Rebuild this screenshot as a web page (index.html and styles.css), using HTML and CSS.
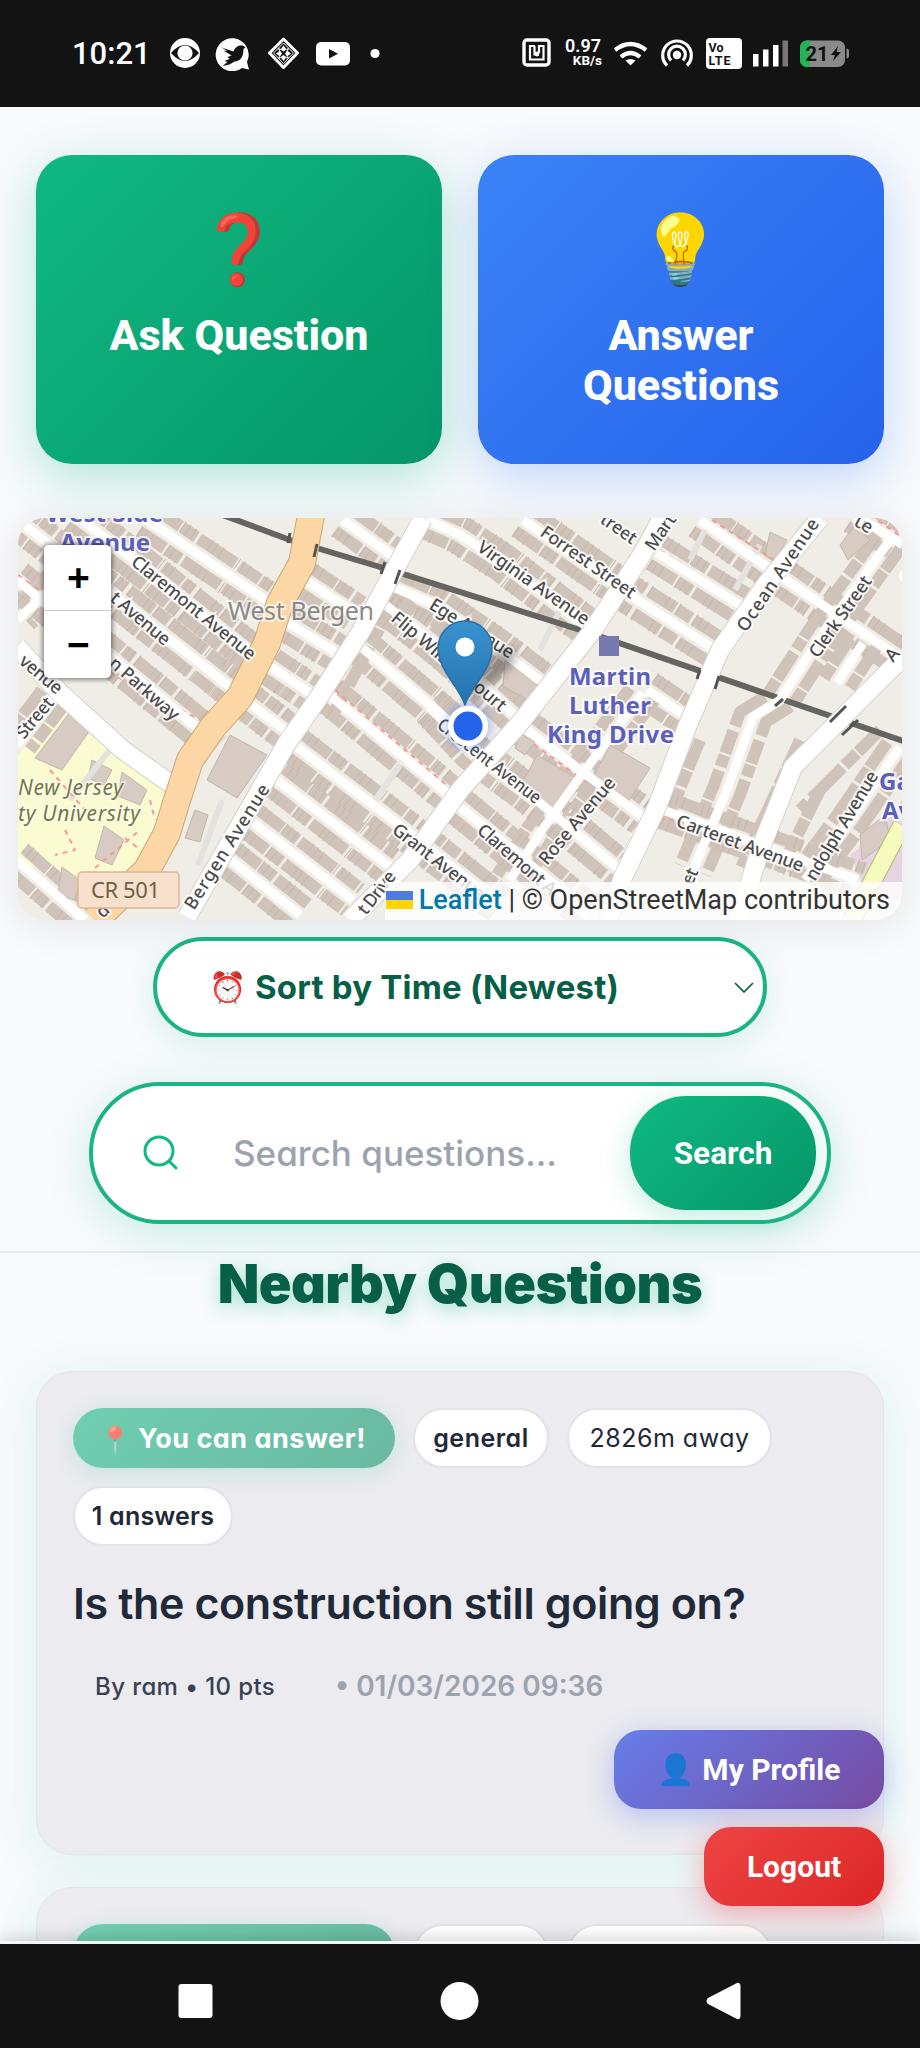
FILE: index.html
```html
<!DOCTYPE html>
<html lang="en">
<head>
    <meta charset="UTF-8">
    <meta name="viewport" content="width=device-width, initial-scale=1.0">
    <title>Nearby Questions</title>
    <link rel="stylesheet" href="styles.css">
</head>
<body>
    <header class="status-bar">
        <span class="clock">10:21</span>
        <svg class="status-left" width="214" height="36" viewBox="168 35 214 36">
            <circle cx="185" cy="53" r="15" fill="#fff"/>
            <path d="M171 53Q185 37 199 53Q185 69 171 53Z" fill="#131313"/>
            <circle cx="185" cy="53" r="7.6" fill="#fff"/>
            <path d="M249 69.500l-7-1.500a16.500 16.500 0 1 1 5-6z" fill="#fff"/>
            <path d="M221.500 47.500l12 4c2-5 5-6.500 9-6l3 1.500-2 2c0 8-3 12-9 12.500l-5 3-7 1.500 5-4-3-1 5-2-2-2 4-1.500-8-5 4 .5z" fill="#131313"/>
            <g fill="none" stroke="#fff">
                <path d="M283.500 39l14 14-14 14.500-14-14.500z" stroke-width="3" stroke-linejoin="round"/>
                <path d="M283.500 43l10 10-10 10.500-10-10.500z" stroke-width="1"/>
            </g>
            <path d="M283.500 45.500l3 4-3 2-3-2zM283.500 61l3-4-3-2-3 2zM276 53.500l4-3 2 3-2 3zM291 53.500l-4-3-2 3 2 3zM278 48l3 1-2 2zM289 48l-3 1 2 2zM278 59l3-1-2-2zM289 59l-3-1 2-2z" fill="#fff"/>
            <rect x="316" y="42" width="34" height="23.500" rx="5" fill="#fff"/>
            <path d="M329 49l9 4.700-9 4.700z" fill="#131313"/>
            <circle cx="375" cy="53.500" r="4.600" fill="#fff"/>
        </svg>
        <svg class="nfc" width="30" height="30" viewBox="0 0 30 30" fill="none" stroke="#fff">
            <rect x="2" y="2" width="25" height="25" rx="3" stroke-width="3.400"/>
            <path d="M13 8H8v13.500h13.500V8H17v7" stroke-width="2.200"/>
            <path d="M12.500 8v8.500h4" stroke-width="2.200"/>
            <circle cx="15" cy="16" r="2.400" fill="#fff" stroke="none"/>
        </svg>
        <span class="speed"><b>0.97</b><small>KB/s</small></span>
        <svg class="radios" width="286" height="36" viewBox="613 35 286 36">
            <g fill="none" stroke="#fff" stroke-width="4.200">
                <path d="M615 50Q630.500 38 646 50"/>
                <path d="M621 57Q630.500 49 640 57"/>
                <path d="M667 65.500a14.300 14.300 0 1 1 20 0" stroke-width="3.200"/>
                <path d="M671 60.500a8.400 8.400 0 1 1 12 0" stroke-width="3.200"/>
            </g>
            <path d="M625.500 60.500Q630.500 57.500 635.500 60.500L630.500 65.500Z" fill="#fff"/>
            <circle cx="677" cy="55" r="4.200" fill="#fff"/>
            <rect x="706" y="38" width="36" height="31" rx="4" fill="#fff"/>
            <text x="708.500" y="51.500" class="volte" textLength="15">Vo</text>
            <text x="708.500" y="65" class="volte" textLength="22">LTE</text>
            <path d="M753 54h5.500v12.500H753zM763 49.500h5.500v17H763zM773 45h5.500v21.500H773z" fill="#fff"/>
            <path d="M782.500 40.500h5.500v26h-5.500z" fill="#777"/>
            <rect x="800" y="40.500" width="45" height="26.500" rx="7" fill="#8a8a8a"/>
            <path d="M810 40.500h-3a7 7 0 0 0-7 7v12.500a7 7 0 0 0 7 7h3z" fill="#22b455"/>
            <path d="M846.500 48.500q2.500 0 2.500 3v4q0 3-2.500 3z" fill="#8a8a8a"/>
            <text x="805.500" y="61" class="battery" textLength="23">21</text>
            <path d="M838 46l-7 9h4l-2 6 8-9h-4.500z" fill="#111"/>
        </svg>
    </header>

    <main class="content">
        <div class="actions">
            <button class="action ask"><span class="emoji">❓</span><span>Ask Question</span></button>
            <button class="action answer"><span class="emoji">💡</span><span>Answer<br>Questions</span></button>
        </div>

        <div class="map">
            <svg class="tiles" width="884" height="402" viewBox="18 518 884 402">
                <defs>
                    <path id="cross" d="M10 510L27 527 230 687 245 700 287 732M17 580L200 730M75 515L130 557 253 655 313 695M327 693L447 793M147 520L273 605M283 620L340 655M353 640L450 722M302 578L355 613M343 520L395 558M427 520L460 535 503 563 587 627M297 747L393 820 500 905M277 780L390 867M250 820L353 900M227 857L300 915M17 860L85 920M430 707L470 750 540 803 620 870M460 807L555 885 590 915M523 727L643 817M663 810L760 845 857 880M523 520L633 597 720 653M657 553L743 607M700 520L767 567 903 660M855 515L903 545M647 690L687 717M393 587L435 605 500 650 543 683M383 603L443 650 517 717"/>
                    <path id="side" d="M890 540L823 633 780 700 753 717 727 790 693 870M643 693L583 773 540 833 510 880M900 747L850 820 805 880M863 643L837 683M60 580L17 620M55 695L17 745"/>
                    <path id="main" d="M423 518L360 633 317 700 287 743 187 917M662 518L643 553 593 630 520 723 460 790 410 860 350 920M820 518L767 583 720 650 687 727 657 807 623 877 608 920M903 657L843 717 793 767 780 800 760 850 738 920M17 647L60 693 123 750 175 787"/>
                    <path id="bus" d="M312 510L302 563 280 603 267 643 250 677 240 697 213 727 190 760 177 800 167 833 147 870 95 920"/>
                </defs>
                <rect x="18" y="518" width="884" height="402" fill="#f0ede6"/>
                <path d="M18 755L65 705 170 790 150 870 80 885 18 860z" fill="#fafbd0"/>
                <path d="M850 855L880 830 902 800V900H870z" fill="#e8d3e3"/>
                <g class="houses">
                    <use href="#cross" transform="translate(8 -11)"/>
                    <use href="#cross" transform="translate(-8 11)"/>
                    <use href="#side" transform="translate(13 5)"/>
                    <use href="#side" transform="translate(-13 -5)"/>
                    <path d="M700 740L665 825M800 740L740 870M820 790L785 860M880 730L800 810M395 600L330 720"/>
                </g>
                <g class="walls">
                    <use href="#cross" transform="translate(8 -12)"/>
                    <use href="#cross" transform="translate(-8 12)"/>
                </g>
                <g class="blocks">
                    <path d="M230 735L267 755 237 798 207 780zM70 712L90 730 62 770 35 758zM92 760L112 770 104 785 88 778zM122 772L147 790 140 805 118 796zM104 826L124 840 112 865 95 858zM62 867L80 880 75 900 58 896zM195 810L208 815 200 842 185 838z"/>
                    <path d="M537 755L583 782 558 815 520 787zM505 660L540 680 528 700 503 686zM610 745L650 768 628 802 590 782zM770 532L787 540 775 560 765 555zM855 525L870 540 848 560 840 545zM860 835L885 815 890 840 862 860zM520 733L535 742 525 755 515 748z"/>
                    <path class="lot" d="M185 775L225 735M198 865L222 800M400 765L375 800M560 610L540 650M690 560L705 530M735 590L760 545M110 750L70 800"/>
                </g>
                <path class="footway" d="M18 575L42 592M110 673L200 720M335 690L450 788M360 645L445 715M300 750L400 825M50 770L85 810M65 830L75 850 55 855M95 868L140 830M125 838L138 848M660 550L745 606M712 520L790 570M870 515L903 538M550 730L535 745 590 785M640 815L700 825M150 800L155 820"/>
                <path class="rail" d="M212 511L290 540 400 573 593 634 903 741"/>
                <g class="street">
                    <use href="#cross"/>
                    <use href="#side"/>
                </g>
                <use href="#main" class="avenue-edge"/>
                <use href="#main" class="avenue"/>
                <use href="#bus" class="county-edge"/>
                <use href="#bus" class="county"/>
                <path d="M902 825L852 920" class="yellow-edge"/>
                <path d="M902 825L852 920" class="yellow"/>
                <path class="bridge" d="M290 533l-2 10M317 544l-3 13M385 562l-4 12M400 570l-5 14M700 670l-3 9M719 676l-4 13M830 722l16-16M842 735l16-15M775 706l8-7"/>
                <circle cx="907" cy="576" r="8" fill="#fff"/>

                <g class="road-names">
                    <text transform="translate(130 564) rotate(39)" textLength="154">Claremont Avenue</text>
                    <text transform="translate(109 600) rotate(40)" textLength="72">t Avenue</text>
                    <text transform="translate(108 665) rotate(41)" textLength="86">n Parkway</text>
                    <text transform="translate(18 663) rotate(40)" textLength="50">venue</text>
                    <text transform="translate(24 740) rotate(-50)" textLength="48">Street</text>
                    <text transform="translate(194 911) rotate(-58)" textLength="144">Bergen Avenue</text>
                    <text transform="translate(366 916) rotate(-52)" textLength="50">t Drive</text>
                    <text transform="translate(391 832) rotate(38)" textLength="112">Grant Avenue</text>
                    <text transform="translate(428 608) rotate(32)" textLength="96">Ege Avenue</text>
                    <text transform="translate(390 620) rotate(40)" textLength="144">Flip Wilson Court</text>
                    <text transform="translate(476 550) rotate(35)" textLength="132">Virginia Avenue</text>
                    <text transform="translate(539 535) rotate(35)" textLength="112">Forrest Street</text>
                    <text transform="translate(599 522) rotate(35)" textLength="40">treet</text>
                    <text transform="translate(654 552) rotate(-55)" textLength="40">Mart</text>
                    <text transform="translate(746 633) rotate(-56)" textLength="132">Ocean Avenue</text>
                    <text transform="translate(818 659) rotate(-55)" textLength="95">Clerk Street</text>
                    <text transform="translate(853 525) rotate(30)" textLength="18">ue</text>
                    <text transform="translate(893 663) rotate(-50)">A</text>
                    <text transform="translate(436 727) rotate(38)" textLength="126" lengthAdjust="spacingAndGlyphs">Crescent Avenue</text>
                    <text transform="translate(476 832) rotate(41)" textLength="98">Claremont A</text>
                    <text transform="translate(547 866) rotate(-50)" textLength="108">Rose Avenue</text>
                    <text transform="translate(675 826) rotate(20)" textLength="134">Carteret Avenue</text>
                    <text transform="translate(815 882) rotate(-59)" textLength="124">ndolph Avenue</text>
                    <text transform="translate(692 886) rotate(-65)" textLength="16">et</text>
                    <text transform="translate(103 919) rotate(-45)">d</text>
                </g>
                <g class="stations">
                    <text x="46" y="522" textLength="117">West Side</text>
                    <text x="60" y="551" textLength="90">Avenue</text>
                    <text x="569" y="685" textLength="82">Martin</text>
                    <text x="569" y="714" textLength="82">Luther</text>
                    <text x="547" y="743" textLength="127">King Drive</text>
                    <text x="879" y="790">Ga</text>
                    <text x="882" y="819">Av</text>
                </g>
                <rect x="599" y="636" width="20" height="20" fill="#7679b0"/>
                <text x="228" y="620" class="suburb" textLength="146">West Bergen</text>
                <g class="campus">
                    <text x="18" y="795" textLength="105">New Jersey</text>
                    <text x="18" y="821" textLength="122">ty University</text>
                </g>
                <rect x="78" y="872" width="101" height="36" rx="4" fill="#f7e1cc" stroke="#dcb895" stroke-width="1.500"/>
                <text x="91" y="898" class="shield" textLength="69">CR 501</text>

                <path d="M466 705L510 668Q525 650 505 648Q480 655 466 705Z" fill="#000" opacity=".3" class="pin-shadow"/>
                <circle cx="468" cy="726" r="23" fill="#2563eb" opacity=".3" class="pin-shadow"/>
                <path d="M465 705C460 688 438 670 438 648a27 27 0 0 1 54 0c0 22-22 40-27 57z" fill="url(#pin)" stroke="#2a6fa5" stroke-width="1.500"/>
                <circle cx="465" cy="647" r="9.500" fill="#fff"/>
                <circle cx="468" cy="726" r="17.300" fill="#2563eb" stroke="#fff" stroke-width="5.500"/>
                <linearGradient id="pin" x2="0" y2="1">
                    <stop stop-color="#3a93cf"/>
                    <stop offset="1" stop-color="#2372ad"/>
                </linearGradient>
            </svg>
            <div class="zoom">
                <button>+</button>
                <button>−</button>
            </div>
            <div class="attribution">
                <svg width="27" height="18"><path d="M0 0h27v9H0z" fill="#4c7be1"/><path d="M0 9h27v9H0z" fill="#ffd500"/></svg>
                <b>Leaflet</b> | © OpenStreetMap contributors
            </div>
        </div>

        <div class="sort">
            <span class="emoji">⏰</span>
            <span class="sort-label">Sort by Time (Newest)</span>
            <svg width="20" height="11" viewBox="0 0 20 11" fill="none" stroke="#065f46" stroke-width="1.700"><path d="M1 1l9 9 9-9"/></svg>
        </div>

        <div class="search">
            <svg width="36" height="36" viewBox="0 0 36 36" fill="none" stroke="#10b981" stroke-width="3" stroke-linecap="round"><circle cx="16" cy="16" r="14"/><path d="M27 27l6 6"/></svg>
            <span class="placeholder">Search questions...</span>
            <button>Search</button>
        </div>
    </main>

    <section class="questions">
        <h1>Nearby Questions</h1>
        <article class="card">
            <div class="badges">
                <span class="badge can"><span class="emoji">📍</span> <span>You can answer!</span></span>
                <span class="badge category">general</span>
                <span class="badge distance">2826m away</span>
                <span class="badge count">1 answers</span>
            </div>
            <h2>Is the construction still going on?</h2>
            <p class="meta"><span class="author">By ram • 10 pts</span><span class="date">• 01/03/2026 09:36</span></p>
        </article>
        <article class="card">
            <div class="badges">
                <span class="badge can"><span class="emoji">📍</span></span>
                <span class="badge category"></span>
                <span class="badge distance"></span>
            </div>
        </article>
    </section>

    <div class="floating">
        <button class="profile"><span class="emoji">👤</span> My Profile</button>
        <button class="logout">Logout</button>
    </div>

    <nav class="nav-bar">
        <svg width="920" height="104" viewBox="0 0 920 104" fill="#fff">
            <rect x="178.500" y="40" width="34" height="34" rx="3"/>
            <circle cx="459.500" cy="57" r="19"/>
            <path d="M708 54L736 39.500q4-2 4.500 2v31q-.5 4-4.500 2L708 60q-3-3 0-6z"/>
        </svg>
    </nav>
</body>
</html>
```
FILE: styles.css
```css
* {
    box-sizing: border-box;
}

body {
    margin: 0;
    height: 2048px;
    position: relative;
    overflow: hidden;
    background: #f8fafc;
    font-family: Inter, sans-serif;
    font-feature-settings: "cv11"; /* single-storey a */
    color: #1f2937;
}

button {
    border: none;
    font-family: Roboto, sans-serif;
    color: white;
}

.emoji {
    font-family: "Noto Color Emoji", sans-serif;
}

/* Status bar */
.status-bar {
    height: 107px;
    padding: 0 0 1px 72px;
    display: flex;
    align-items: center;
    background: #131313;
    color: white;
    font-family: Roboto, sans-serif;
}

.clock {
    width: 96px;
    font-size: 31px;
    font-weight: 500;
}

.nfc {
    margin-left: 140px;
}

.speed {
    width: 50px;
    display: flex;
    flex-direction: column;
    text-align: right;
    line-height: 15px;
}

.speed b {
    padding-right: 1px;
    font-size: 18px;
    font-weight: 600;
}

.speed small {
    font-size: 13.5px;
    font-weight: 700;
}

.radios {
    margin-left: 11px;
}

.volte {
    font: 700 12.500px Roboto, sans-serif;
    fill: #131313;
}

.battery {
    font: 700 20px Roboto, sans-serif;
    fill: #111;
}

/* Top buttons */
.content {
    height: 1146px;
    padding: 48px 18px 0;
    border-bottom: 2px solid #e8ebee;
}

.actions {
    display: grid;
    grid-template-columns: 1fr 1fr;
    gap: 36px;
    padding: 0 18px;
}

.action {
    height: 309px;
    padding: 49px 0 0;
    display: flex;
    flex-direction: column;
    align-items: center;
    border-radius: 36px;
    font-size: 43px;
    font-weight: 800;
    line-height: 50px;
}

.action .emoji {
    height: 82px;
    margin-bottom: 24px;
    font-size: 68px;
    line-height: 92px;
}

.ask {
    background: linear-gradient(135deg, #10b981, #059669);
    box-shadow: 0 14px 50px rgba(16, 185, 129, 0.3);
}

.answer {
    background: linear-gradient(135deg, #3b82f6, #2563eb);
    box-shadow: 0 14px 50px rgba(59, 130, 246, 0.3);
}

/* Map */
.map {
    position: relative;
    height: 402px;
    margin-top: 54px;
    border-radius: 27px;
    overflow: hidden;
    box-shadow: 0 5px 40px rgba(0, 0, 0, 0.09);
}

.tiles {
    display: block;
    font-family: "Noto Sans", sans-serif;
}

.tiles use,
.tiles path {
    stroke-linejoin: round;
}

.houses {
    fill: none;
    stroke: #d0c3b9;
    stroke-width: 12;
    stroke-dasharray: 31 2 17 3 44 5 24 2 12 4;
}

.walls {
    fill: none;
    stroke: #c6b7ac;
    stroke-width: 12;
    stroke-dasharray: 1 5 1 6 1 19;
}

.blocks {
    fill: #d8cbc4;
    stroke: #c4b5ab;
    stroke-width: 1;
}

.lot {
    fill: none;
    stroke: #e4e2e0;
    stroke-width: 6;
}

.footway {
    fill: none;
    stroke: #f69a95;
    stroke-width: 2;
    stroke-dasharray: 5 5;
}

.rail {
    fill: none;
    stroke: #666461;
    stroke-width: 6;
}

.bridge {
    stroke: #555;
    stroke-width: 3;
}

.street {
    fill: none;
    stroke: #fff;
    stroke-width: 9;
}

.avenue-edge {
    fill: none;
    stroke: #d5d2cd;
    stroke-width: 20;
}

.avenue {
    fill: none;
    stroke: #fff;
    stroke-width: 18;
}

.county-edge {
    fill: none;
    stroke: #c9a876;
    stroke-width: 28;
}

.county {
    fill: none;
    stroke: #fcd6a4;
    stroke-width: 26;
}

.yellow-edge {
    stroke: #b3bd6c;
    stroke-width: 19;
}

.yellow {
    stroke: #f6fabd;
    stroke-width: 17;
}

.road-names text {
    font-size: 18px;
    font-weight: 500;
    fill: #4b4b4b;
    stroke: rgba(255, 255, 255, 0.8);
    stroke-width: 4;
    paint-order: stroke;
}

.stations text {
    font-size: 24px;
    font-weight: 700;
    fill: #5a60bb;
    stroke: rgba(255, 255, 255, 0.75);
    stroke-width: 4;
    paint-order: stroke;
}

.suburb {
    font-size: 25px;
    fill: #8b8886;
    stroke: rgba(255, 255, 255, 0.6);
    stroke-width: 4;
    paint-order: stroke;
}

.campus text {
    font-size: 21px;
    font-style: italic;
    fill: #757747;
    stroke: rgba(255, 255, 255, 0.6);
    stroke-width: 3;
    paint-order: stroke;
}

.shield {
    font-size: 22px;
    fill: #6f6045;
}

.pin-shadow {
    filter: blur(4px);
}

.zoom {
    position: absolute;
    left: 26px;
    top: 27px;
    width: 67px;
    border-radius: 5px;
    box-shadow: 0 0 4px 2px rgba(0, 0, 0, 0.4);
}

.zoom button {
    display: block;
    width: 67px;
    height: 67px;
    padding: 0 0 0 2px;
    background: white;
    border-radius: 0 0 5px 5px;
    color: black;
    font: 700 39px "Liberation Sans", sans-serif;
    line-height: 60px;
}

.zoom button:first-child {
    height: 66px;
    border-bottom: 1px solid #ccc;
    border-radius: 5px 5px 0 0;
}

.attribution {
    position: absolute;
    right: 0;
    bottom: 0;
    height: 38px;
    width: 517px;
    padding-right: 12px;
    background: rgba(255, 255, 255, 0.8);
    color: #333;
    font: 27px/37px Roboto, sans-serif;
    text-align: right;
    white-space: nowrap;
}

.attribution b {
    color: #0078a8;
    font-weight: 500;
}

.attribution svg {
    margin-right: -1px;
}

/* Sort and search */
.sort {
    width: 614px;
    height: 100px;
    margin: 17px auto 0;
    padding: 0 9px 0 52px;
    display: flex;
    align-items: center;
    border: 4px solid #1bb583;
    border-radius: 50px;
    background: white;
    box-shadow: 0 8px 30px rgba(16, 185, 129, 0.14);
    color: #065f46;
}

.sort .emoji {
    width: 46px;
    font-size: 30px;
}

.sort-label {
    flex: 1;
    font-size: 33px;
    font-weight: 650;
    letter-spacing: 0.2px;
}

.search {
    width: 742px;
    height: 142px;
    margin: 45px auto 0;
    padding: 0 11px 0 50px;
    display: flex;
    align-items: center;
    border: 4px solid #1bb583;
    border-radius: 71px;
    background: white;
    box-shadow: 0 10px 45px rgba(16, 185, 129, 0.2);
}

.placeholder {
    flex: 1;
    margin-left: 54px;
    color: #9ca3af;
    font-size: 35px;
    font-weight: 500;
}

.search button {
    width: 186px;
    height: 114px;
    padding: 0;
    border-radius: 56px;
    background: linear-gradient(135deg, #10b981, #059669);
    box-shadow: 0 8px 30px rgba(16, 185, 129, 0.25);
    font-size: 31.5px;
    font-weight: 700;
}

/* Questions */
.questions {
    height: 690px;
    padding: 0 36px;
    overflow: hidden;
}

h1 {
    height: 118px;
    margin: 0;
    text-align: center;
    color: #065f46;
    font-size: 54px;
    font-weight: 900;
    letter-spacing: -0.5px;
    line-height: 61px;
    text-shadow: 0 5px 18px rgba(16, 185, 129, 0.35);
    white-space: nowrap;
}

.card {
    height: 484px;
    margin-bottom: 32px;
    padding: 36px 36px 0;
    border: 1.500px solid #e2e6e9;
    border-radius: 36px;
    background: #ebebf0;
    box-shadow: 0 8px 50px rgba(16, 185, 129, 0.12);
}

.badges {
    height: 140px;
    display: flex;
    flex-wrap: wrap;
    align-content: flex-start;
    gap: 18px;
}

.badge {
    height: 60px;
    display: flex;
    align-items: center;
    justify-content: center;
    border: 2px solid #dfe4ea;
    border-radius: 30px;
    background: white;
    font-size: 25px;
    font-weight: 600;
    letter-spacing: 0.5px;
    white-space: nowrap;
}

.can {
    width: 322px;
    padding-left: 26px;
    gap: 6px;
    justify-content: flex-start;
    border: none;
    background: linear-gradient(135deg, #70cfb1, #69b9a0);
    box-shadow: 0 5px 22px rgba(16, 185, 129, 0.16);
    color: white;
    font-size: 27px;
    font-weight: 700;
}

.can .emoji {
    padding-top: 4px;
    font-size: 26px;
    filter: contrast(0.6) brightness(1.35);
}

.category {
    width: 136px;
}

.distance {
    width: 205px;
    font-weight: 400;
}

.count {
    width: 160px;
    letter-spacing: 0.2px;
}

h2 {
    height: 98px;
    margin: 0;
    font-size: 43px;
    font-weight: 600;
    letter-spacing: -0.4px;
    line-height: 111px;
    white-space: nowrap;
}

.meta {
    height: 60px;
    margin: 10px 0 0;
    padding-left: 22px;
    display: flex;
    align-items: center;
}

.author {
    width: 240px;
    color: #374151;
    font-size: 24px;
    font-weight: 550;
    letter-spacing: 0.4px;
}

.date {
    color: #9ca3af;
    font-size: 28px;
    font-weight: 600;
}

/* Buttons over the list */
.floating {
    position: absolute;
    right: 36px;
    top: 1730px;
    display: flex;
    flex-direction: column;
    align-items: flex-end;
    gap: 18px;
}

.floating button {
    height: 79px;
    padding: 0;
    border-radius: 27px;
    font-size: 30px;
    font-weight: 700;
}

.profile {
    width: 270px;
    background: linear-gradient(135deg, #667eea, #764ba2);
    box-shadow: 0 7px 28px rgba(102, 126, 234, 0.4);
}

.logout {
    width: 180px;
    background: linear-gradient(135deg, #ef4444, #dc2626);
    box-shadow: 0 7px 28px rgba(239, 68, 68, 0.4);
}

.nav-bar {
    position: absolute;
    left: 0;
    bottom: 0;
    height: 107px;
    border-top: 3px solid #f4f5f6;
    background: #131313;
    box-shadow: 0 -4px 14px rgba(0, 0, 0, 0.14);
}

.nav-bar svg {
    display: block;
}
```
